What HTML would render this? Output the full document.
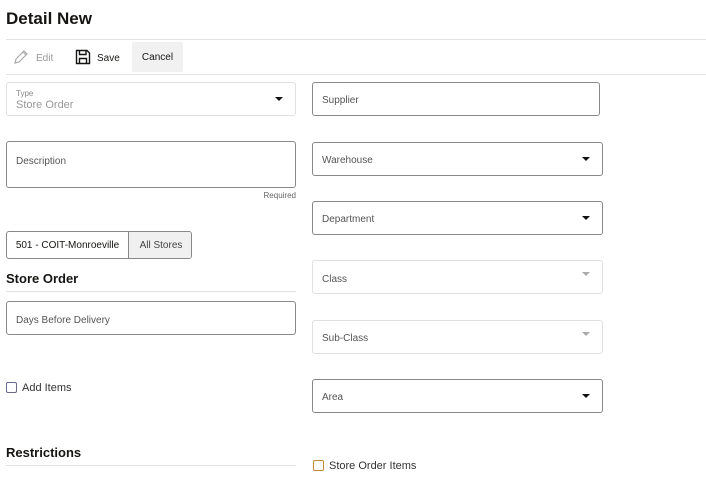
<!DOCTYPE html>
<html><head><style>
*{box-sizing:border-box;margin:0;padding:0}
body{width:706px;height:489px;background:#fff;font-family:"Liberation Sans",sans-serif;color:#161513;position:relative;overflow:hidden}
.a{position:absolute}
.f{position:absolute;border:1px solid #8a8886;border-radius:3px;background:#fff}
.l{border-color:#e0e0e0}
.t{position:absolute;left:9px;font-size:10px;color:#555}
.arr{position:absolute;right:12px;top:50%;margin-top:-2px;width:0;height:0;border-left:4.5px solid transparent;border-right:4.5px solid transparent;border-top:4.5px solid #111}
.arr.g{border-top-color:#aaa}
.hr{position:absolute;height:1px;background:#e3e3e3}
</style></head><body>
<div class="a" style="left:6px;top:9px;font-size:17px;font-weight:bold">Detail New</div>
<div class="hr" style="left:6px;top:39px;width:700px"></div>
<svg class="a" style="left:13px;top:49px" width="16" height="16" viewBox="0 0 16 16"><path d="M2 14 L3 10 L11 2 L14 5 L6 13 Z M10 3 L13 6" fill="none" stroke="#aaa" stroke-width="1.2"/></svg>
<div class="a" style="left:36px;top:53px;font-size:10px;color:#999">Edit</div>
<svg class="a" style="left:75px;top:49px" width="16" height="16" viewBox="0 0 16 16"><path d="M1.5 1.5 H12 L14.5 4 V14.5 H1.5 Z M4.5 1.5 V5.5 H11 V1.5 M4.5 14.5 V9.5 H11.5 V14.5" fill="none" stroke="#161513" stroke-width="1.4"/></svg>
<div class="a" style="left:97px;top:53px;font-size:10px">Save</div>
<div class="a" style="left:132px;top:42px;width:51px;height:30px;background:#f1f1f1;border-radius:2px;font-size:10px;text-align:center;line-height:32px">Cancel</div>
<div class="hr" style="left:6px;top:74px;width:700px"></div>

<div class="f l" style="left:6px;top:82px;width:290px;height:34px"><div class="t" style="top:6px;font-size:8px;color:#888">Type</div><div class="t" style="top:16px;font-size:11px;color:#999">Store Order</div><div class="arr"></div></div>
<div class="f" style="left:6px;top:141px;width:290px;height:47px"><div class="t" style="top:14px">Description</div></div>
<div class="a" style="left:250px;top:191px;width:46px;text-align:right;font-size:8px;color:#666">Required</div>

<div class="f" style="left:6px;top:231px;width:186px;height:28px;overflow:hidden"><div class="a" style="left:0;top:0;width:122px;height:26px;line-height:27px;text-align:center;font-size:10px;border-right:1px solid #8a8886">501 - COIT-Monroeville</div><div class="a" style="left:122px;top:0;width:64px;height:26px;line-height:27px;text-align:center;font-size:10px;background:#f0f0f0;color:#444">All Stores</div></div>

<div class="a" style="left:6px;top:271px;font-size:13px;font-weight:bold">Store Order</div>
<div class="hr" style="left:6px;top:291px;width:290px"></div>
<div class="f" style="left:6px;top:301px;width:290px;height:34px"><div class="t" style="top:13px">Days Before Delivery</div></div>

<div class="a" style="left:6px;top:382px;width:11px;height:11px;border:1px solid #6a6a8a;border-radius:2px"></div>
<div class="a" style="left:22px;top:382px;font-size:11px;color:#333">Add Items</div>

<div class="a" style="left:6px;top:445px;font-size:13px;font-weight:bold">Restrictions</div>
<div class="hr" style="left:6px;top:465px;width:290px"></div>

<div class="f" style="left:312px;top:82px;width:288px;height:34px"><div class="t" style="top:12px">Supplier</div></div>
<div class="f" style="left:312px;top:142px;width:291px;height:34px"><div class="t" style="top:12px">Warehouse</div><div class="arr"></div></div>
<div class="f" style="left:312px;top:201px;width:291px;height:34px"><div class="t" style="top:12px">Department</div><div class="arr"></div></div>
<div class="f l" style="left:312px;top:260px;width:291px;height:34px"><div class="t" style="top:13px">Class</div><div class="arr g" style="margin-top:-5px"></div></div>
<div class="f l" style="left:312px;top:320px;width:291px;height:34px"><div class="t" style="top:12px">Sub-Class</div><div class="arr g" style="margin-top:-5px"></div></div>
<div class="f" style="left:312px;top:379px;width:291px;height:34px"><div class="t" style="top:12px">Area</div><div class="arr"></div></div>

<div class="a" style="left:313px;top:460px;width:11px;height:11px;border:1px solid #c08a3a;border-radius:2px"></div>
<div class="a" style="left:329px;top:460px;font-size:11px;color:#333">Store Order Items</div>
</body></html>
